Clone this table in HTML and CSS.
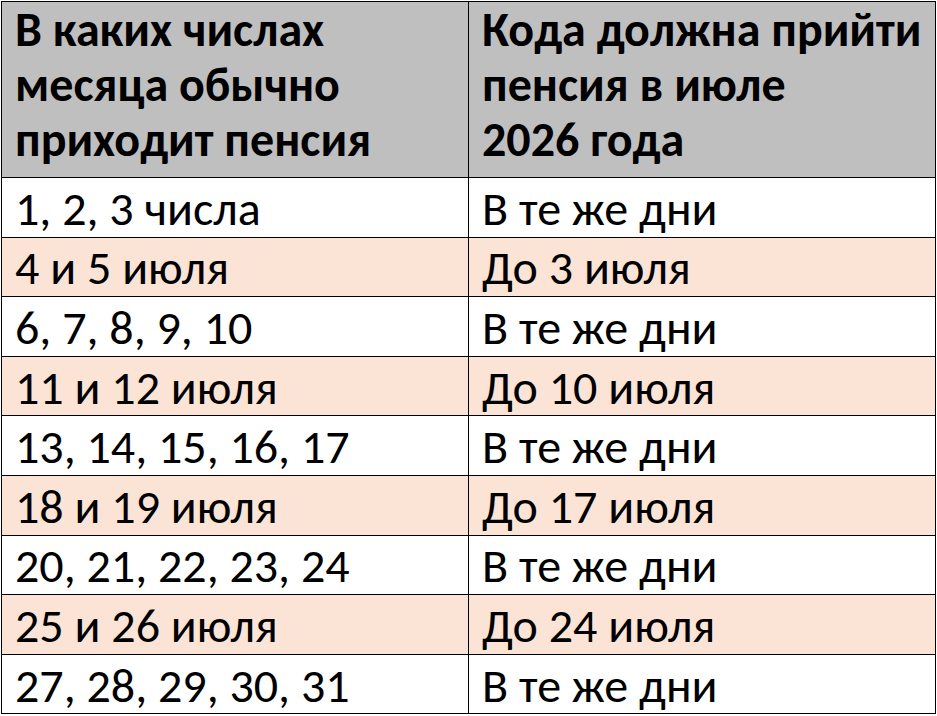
FILE: index.html
```html
<!DOCTYPE html>
<html lang="ru">
<head>
<meta charset="utf-8">
<link rel="stylesheet" href="styles.css">
</head>
<body>
<table class="pension">
  <thead>
    <tr class="head">
      <th class="c1">В каких числах<br>месяца обычно<br>приходит пенсия</th>
      <th class="c2">Кода должна прийти<br>пенсия в июле<br>2026 года</th>
    </tr>
  </thead>
  <tbody>
    <tr><td>1, 2, 3 числа</td><td>В те же дни</td></tr>
    <tr class="alt"><td>4 и 5 июля</td><td>До 3 июля</td></tr>
    <tr><td>6, 7, 8, 9, 10</td><td>В те же дни</td></tr>
    <tr class="alt"><td>11 и 12 июля</td><td>До 10 июля</td></tr>
    <tr><td>13, 14, 15, 16, 17</td><td>В те же дни</td></tr>
    <tr class="alt"><td>18 и 19 июля</td><td>До 17 июля</td></tr>
    <tr><td>20, 21, 22, 23, 24</td><td>В те же дни</td></tr>
    <tr class="alt"><td>25 и 26 июля</td><td>До 24 июля</td></tr>
    <tr><td>27, 28, 29, 30, 31</td><td>В те же дни</td></tr>
  </tbody>
</table>
</body>
</html>
```
FILE: styles.css
```css
html, body {
  margin: 0;
  padding: 0;
  background: #ffffff;
}
body {
  padding: 1px 0 0 1px;
}
.pension {
  border-collapse: collapse;
  width: 935px;
  table-layout: fixed;
  font-family: Carlito, Lato, "Open Sans", sans-serif;
  font-size: 48px;
  color: #000;
}
.pension th, .pension td {
  border: 1px solid #000;
  text-align: left;
  padding: 0 2px 0 13px;
  white-space: nowrap;
  overflow: hidden;
}
.c1 { width: 467px; }
.head th {
  background: #bfbfbf;
  font-weight: 700;
  line-height: 55px;
  height: 176px;
  vertical-align: top;
  padding-top: 0;
  box-sizing: border-box;
}
.pension tbody tr {
  height: 59.6px;
}
.pension td {
  line-height: 48px;
  vertical-align: middle;
  padding-top: 3px;
  padding-bottom: 0;
}
.alt td {
  background: #fbe4d5;
}
```
